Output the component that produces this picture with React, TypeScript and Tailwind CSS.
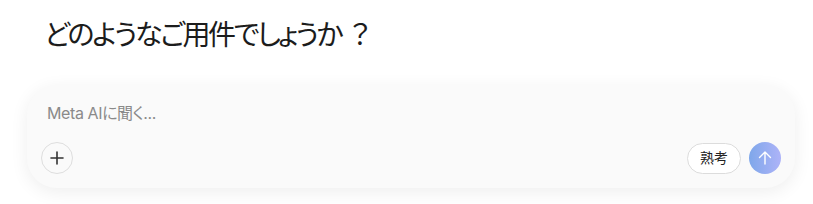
import React from "react";

export default function App() {
  return (
    <div className="w-[813px] h-[204px] bg-white overflow-hidden" style={{ fontFamily: 'Inter, "Noto Sans CJK JP", sans-serif' }}>
      <div className="pl-[44px] pt-[15px] h-[85px]">
        <h1 className="text-[28px] leading-[40px] text-[#1c1c1c] font-normal tracking-[-2.4px] [font-feature-settings:'palt']">
          どのようなご用件でしょうか<span className="ml-[5px] tracking-normal [font-feature-settings:normal]">？</span>
        </h1>
      </div>
      <div className="ml-[27px] w-[768px] h-[103px] rounded-[30px] bg-[#fafafa] shadow-[0_4px_18px_rgba(0,0,0,0.07)] flex flex-col justify-between px-[14px] pt-[15px] pb-[14px]">
        <div className="pl-[6px] text-[16px] leading-[26px] text-[#8a8a8a] tracking-[-0.4px] [font-feature-settings:'palt']">Meta AIに聞く...</div>
        <div className="flex items-center justify-between">
          <button className="w-[32px] h-[32px] rounded-full border border-[#dedede] bg-[#fafafa] flex items-center justify-center">
            <svg width="14" height="14" viewBox="0 0 14 14" fill="none" stroke="#333" strokeWidth="1.6" strokeLinecap="round">
              <path d="M7 1v12M1 7h12" />
            </svg>
          </button>
          <div className="flex items-center gap-[8px]">
            <button className="h-[31px] px-[12px] rounded-full border border-[#dcdcdc] bg-white text-[14px] text-[#222] leading-none flex items-center">熟考</button>
            <button className="w-[32px] h-[32px] rounded-full bg-gradient-to-r from-[#7ea7ea] to-[#adb3f8] flex items-center justify-center">
              <svg width="16" height="16" viewBox="0 0 16 16" fill="none" stroke="white" strokeWidth="1.4" strokeLinecap="round" strokeLinejoin="round">
                <path d="M8 14V2M2.5 7.5L8 2l5.5 5.5" />
              </svg>
            </button>
          </div>
        </div>
      </div>
    </div>
  );
}
